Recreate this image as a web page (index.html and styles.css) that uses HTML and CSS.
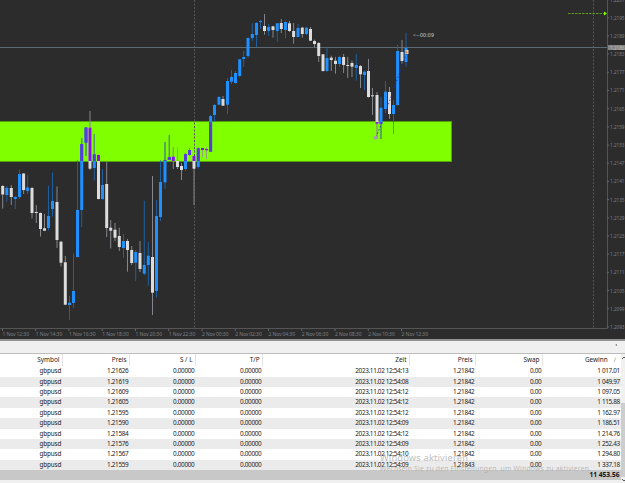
FILE: index.html
```
<!DOCTYPE html>
<html lang="de">
<head>
    <meta charset="UTF-8">
    <meta name="viewport" content="width=device-width, initial-scale=1.0">
    <title>GBPUSD</title>
    <link rel="stylesheet" href="styles.css">
    <script src="chart.js" defer></script>
</head>
<body>
<svg class="chart" width="625" height="339" viewBox="0 0 625 339">
    <defs>
        <clipPath id="in-zone"><rect x="0" y="122" width="451" height="39"/></clipPath>
    </defs>
    <rect class="zone" x="-1" y="121.5" width="452.5" height="40"/>
    <path class="day" d="M194.5 0V328M593.5 0V328"/>
    <path class="bid" d="M0 47.5H607"/>
    <g id="candles"></g>
    <g id="candles-zone" clip-path="url(#in-zone)"></g>
    <path class="trade" d="M376 137L381 125L407 52"/>
    <circle class="entry" cx="375.3" cy="137.7" r="2"/>
    <path class="exit" d="M405.5 50h3v4h-3z"/>
    <path class="exit-mark" d="M406 51l2 1.2l-2 1.2z"/>
    <text class="timer" x="413" y="36.8" textLength="21">&lt;--00:09</text>
    <path class="shift" d="M568 13.5H604"/>
    <path class="shift-head" d="M604 11.5l3 2l-3 2z"/>
    <path class="axis" d="M0 328.500H607.500V0"/>
    <g id="ticks"></g>
    <rect class="bid-box" x="608" y="45" width="17" height="5"/>
    <text class="bid-text" x="610" y="49.5" textLength="14.5" lengthAdjust="spacingAndGlyphs">1.2186</text>
</svg>
<div class="splitter"><span class="collapse"></span></div>
<div class="terminal">
    <div class="history">
        <div class="row head"><span>Symbol</span><span>Preis</span><span>S / L</span><span>T/P</span><span>Zeit</span><span>Preis</span><span>Swap</span><span>Gewinn<i class="sort">∕</i></span></div>
        <div class="row"><span>gbpusd</span><span>1.21626</span><span>0.00000</span><span>0.00000</span><span>2023.11.02 12:54:13</span><span>1.21842</span><span>0.00</span><span>1 017.01</span></div>
        <div class="row"><span>gbpusd</span><span>1.21619</span><span>0.00000</span><span>0.00000</span><span>2023.11.02 12:54:08</span><span>1.21842</span><span>0.00</span><span>1 049.97</span></div>
        <div class="row"><span>gbpusd</span><span>1.21609</span><span>0.00000</span><span>0.00000</span><span>2023.11.02 12:54:12</span><span>1.21842</span><span>0.00</span><span>1 097.05</span></div>
        <div class="row"><span>gbpusd</span><span>1.21605</span><span>0.00000</span><span>0.00000</span><span>2023.11.02 12:54:12</span><span>1.21842</span><span>0.00</span><span>1 115.88</span></div>
        <div class="row"><span>gbpusd</span><span>1.21595</span><span>0.00000</span><span>0.00000</span><span>2023.11.02 12:54:12</span><span>1.21842</span><span>0.00</span><span>1 162.97</span></div>
        <div class="row"><span>gbpusd</span><span>1.21590</span><span>0.00000</span><span>0.00000</span><span>2023.11.02 12:54:09</span><span>1.21842</span><span>0.00</span><span>1 186.51</span></div>
        <div class="row"><span>gbpusd</span><span>1.21584</span><span>0.00000</span><span>0.00000</span><span>2023.11.02 12:54:12</span><span>1.21842</span><span>0.00</span><span>1 214.76</span></div>
        <div class="row"><span>gbpusd</span><span>1.21576</span><span>0.00000</span><span>0.00000</span><span>2023.11.02 12:54:09</span><span>1.21842</span><span>0.00</span><span>1 252.43</span></div>
        <div class="row"><span>gbpusd</span><span>1.21567</span><span>0.00000</span><span>0.00000</span><span>2023.11.02 12:54:10</span><span>1.21842</span><span>0.00</span><span>1 294.80</span></div>
        <div class="row"><span>gbpusd</span><span>1.21559</span><span>0.00000</span><span>0.00000</span><span>2023.11.02 12:54:09</span><span>1.21843</span><span>0.00</span><span>1 337.18</span></div>
        <div class="total">11 453.56</div>
    </div>
    <div class="scrollbar">
        <svg width="4" height="8" viewBox="0 0 4 8"><path d="M1 5l2-2l2 2"/></svg>
        <div class="thumb"></div>
        <svg width="4" height="6" viewBox="0 0 4 6"><path d="M1 2l2 2l2-2"/></svg>
    </div>
</div>
<svg class="watermark" width="212" height="28" viewBox="0 0 212 28">
    <text class="wm-title" x="0" y="12" textLength="88">Windows aktivieren</text>
    <text class="wm-sub" x="0" y="22" textLength="211">Wechseln Sie zu den Einstellungen, um Windows zu aktivieren.</text>
</svg>
</body>
</html>
```
FILE: styles.css
```
body {
    margin: 0;
    height: 483px;
    overflow: hidden;
    display: flex;
    flex-direction: column;
    background: #fff;
    font-family: 'Noto Sans', 'Open Sans', sans-serif;
    font-size: 6.4px;
    color: #222;
}

.chart {
    display: block;
    flex: none;
    background: #2c2c2c;
}

.zone {
    fill: #80ff00;
    stroke: #55a30a;
}

.day {
    stroke: #555;
    stroke-dasharray: 2 1.5;
}

.bid {
    stroke: #5d6973;
}

.axis {
    fill: none;
    stroke: #555;
}

.tick {
    stroke: #666;
}

.label {
    font-size: 5px;
    fill: #7c8085;
}

.up-wick { fill: #1f5f9f; }
.up { fill: #1e90ff; }
.down-wick { fill: #85858c; }
.down { fill: #dcdcdc; }

#candles-zone .up-wick { fill: #5fa060; }
#candles-zone .up { fill: #593ddb; }
#candles-zone .down-wick { fill: #91a477; }
#candles-zone .down { fill: #8a10e8; }

.trade {
    fill: none;
    stroke: #2626b8;
    stroke-width: .8;
    stroke-dasharray: 1.5 2;
}

.entry { fill: #a9a3ae; }
.exit { fill: #ddd6cc; }
.exit-mark { fill: #d4762c; }

.timer {
    font-size: 5.2px;
    fill: #d0d0d0;
}

.shift {
    stroke: #5e9a14;
    stroke-dasharray: 2.5 1;
}

.shift-head { fill: #80ff00; }

.bid-box { fill: #858585; }

.bid-text {
    font-size: 5px;
    fill: #bbb;
}

.splitter {
    flex: none;
    box-sizing: border-box;
    height: 15px;
    border-top: 2px solid #929292;
    border-bottom: 1px solid #bdbdbd;
    background: #f0f0f0;
    display: flex;
    justify-content: flex-end;
    align-items: center;
    padding: 0 8px 4px 0;
}

.collapse {
    border: 1.5px solid transparent;
    border-right: 2px solid #777;
    border-left: 0;
}

.terminal {
    display: flex;
    flex: 1;
    min-height: 0;
    background: #f0f0f0;
}

.history {
    flex: none;
    width: 621px;
}

.row {
    display: grid;
    grid-template-columns: 62.5px 67px 66px 67px 147px 66px 67px 78.5px;
    height: 10.4px;
    background: #fff;
    line-height: 10px;
    text-align: right;
    white-space: nowrap;
}

.row span {
    padding-right: 1.2px;
    letter-spacing: -.35px;
}

.row span:first-child {
    letter-spacing: -.15px;
}

.row:nth-child(odd) {
    background: #ebebeb;
}

.head.row {
    height: 12.2px;
    line-height: 12px;
    background: #fff;
}

.head.row span {
    padding-right: 2px;
    border-right: 1px solid #e4e4e4;
    letter-spacing: 0;
}

.head.row span:last-child {
    border-right: 0;
    padding-right: 5px;
}

.sort {
    margin-left: 6px;
    font-style: normal;
    color: #888;
}

.total {
    height: 10px;
    padding-right: 1.5px;
    background: #c8c8c8;
    color: #111;
    font-size: 6.6px;
    font-weight: bold;
    line-height: 10px;
    text-align: right;
}

.scrollbar {
    width: 4px;
    display: flex;
    flex-direction: column;
}

.scrollbar path {
    fill: none;
    stroke: #555;
}

.thumb {
    height: 74px;
    margin-top: auto;
    background: #cdcdcd;
}

/* system notice floats over the table */
.watermark {
    position: absolute;
    left: 380px;
    top: 449px;
    fill: #a8a8a8;
    fill-opacity: .75;
}

.wm-title { font-size: 9.4px; }
.wm-sub { font-size: 6.8px; }
```
FILE: chart.js
```
// x, high, low, body top, body bottom, up
const candles = [
    [2.7, 185, 208.7, 186, 194.5, 0], [6.8, 186, 202, 188, 195, 1], [11.3, 185, 205, 188, 197, 0],
    [15.3, 196, 209, 197, 199, 1], [19.5, 169.5, 199, 174, 197, 1], [23.6, 173, 194, 173.5, 190, 0],
    [27.6, 175, 194, 187.5, 191, 1], [32, 187, 218.5, 188, 213, 0], [36.3, 205, 223, 212, 213, 0],
    [40.5, 212.5, 236.5, 213, 229, 0], [44.5, 214, 230.5, 228.3, 230.7, 0], [48.5, 186, 230.5, 216, 228, 1],
    [52.5, 172.5, 216.5, 201, 209, 1], [57, 186.5, 248, 202, 240, 0], [61, 241, 266.5, 241.7, 262.7, 0],
    [65.3, 256, 305, 262.3, 304.7, 0], [69.5, 296, 320, 302.7, 305, 1], [73.5, 253.5, 308, 291, 303, 1],
    [77.5, 160, 257.5, 210, 257, 1], [81.7, 138, 227, 144, 210, 1], [86, 127, 156, 127.5, 142.7, 1],
    [90, 111, 170, 127.7, 168.7, 0], [94.3, 134, 180.5, 154.3, 168, 1], [98.5, 154.5, 199.5, 155, 199, 0],
    [102.5, 169, 200, 185, 199, 1], [106.7, 162, 237, 184, 228, 0], [110.7, 220, 248.5, 227.7, 230.7, 0],
    [115, 223, 241, 229.7, 237.7, 0], [119.3, 227.7, 251, 236, 247, 0], [123.5, 234, 257.7, 241, 248, 1],
    [127.5, 239, 271.7, 241, 250, 0], [131.7, 246, 265, 250, 263, 0], [135.7, 250, 281, 252, 262.7, 1],
    [140, 241, 272, 253, 269, 0], [144.3, 200.7, 275.3, 265, 273.7, 1], [148.3, 242, 285.7, 255.7, 265, 1],
    [152.5, 176, 315, 257, 292.7, 0], [156.5, 200, 297.3, 216, 291, 1], [160.5, 160, 221, 182, 217, 1],
    [165, 142, 188.7, 160, 182.3, 1], [169.3, 135, 160, 157, 160, 1], [173.3, 147, 169, 156.7, 161, 0],
    [177.5, 147.7, 169, 161, 167, 0], [181.5, 163, 180, 166, 170, 0], [185.5, 153, 171, 154, 169, 1],
    [189.5, 148.3, 156, 150, 155, 1], [194, 156, 205, 156, 168.7, 0], [198.3, 147.7, 168.7, 148.3, 167, 1],
    [202.5, 148, 157, 148, 150, 0], [206.5, 147, 159, 149, 150.3, 0], [210.6, 115, 152, 116, 151.7, 1],
    [214.5, 104, 121.7, 105, 115, 1], [219, 96, 105, 97, 104.7, 1], [223, 96, 106, 99, 105.7, 0],
    [227.5, 78, 114, 81, 104.7, 1], [231.5, 70, 84, 77, 81.7, 1], [235.5, 71, 84, 73, 83, 1],
    [239.7, 59, 77.3, 59.3, 76, 1], [243.7, 51, 67, 57, 59, 1], [248, 37.3, 58, 38, 56, 1],
    [252.3, 23.3, 41, 34, 38, 1], [256.5, 22, 47, 23, 35, 1], [260.5, 20, 29, 21, 22, 1],
    [264.5, 14, 34.7, 26, 31, 0], [268.6, 24, 36, 27, 31, 1], [273, 26, 37.7, 26.3, 30, 0],
    [277.3, 23, 42, 23.3, 31, 1], [281.3, 19, 33, 23, 29, 0], [285.5, 20.7, 38, 22, 30, 1],
    [289.5, 21, 32, 23.3, 31, 0], [293.6, 23, 43.7, 31, 37, 0], [298, 24, 37, 28, 37, 1],
    [302.3, 26.7, 37.7, 27.7, 34, 0], [306.5, 27, 35, 27.7, 34, 1], [310.5, 27, 41, 29, 40.7, 0],
    [314.5, 39.7, 47, 41, 44, 0], [318.7, 42, 62, 43, 56, 0], [323, 54, 71.7, 54.3, 71, 0],
    [327, 47.7, 71.7, 58, 71, 1], [331.3, 55.7, 71, 57.7, 60, 0], [335.5, 57, 73.7, 60.7, 64, 0],
    [339.5, 55.7, 67, 57, 64, 1], [343.6, 54, 73, 57, 65, 0], [347.7, 57, 78, 65, 66, 0],
    [352, 60.7, 77, 63, 66.7, 0], [356.3, 54, 80.7, 65, 68, 1], [360.5, 65, 88, 66, 74.3, 0],
    [364.5, 70.7, 90, 71.7, 75, 1], [368.5, 59, 97.7, 71, 97, 0], [372.5, 88, 115, 95.3, 96.3, 0],
    [377, 92, 138.7, 95, 123.7, 0], [381, 96.7, 139, 107.7, 123.7, 1], [385.5, 81, 113, 91.7, 109, 1],
    [389.5, 87, 119, 92, 114, 0], [393.5, 100, 133.7, 105, 114, 1], [397.6, 44.7, 105.7, 51, 105, 1],
    [402, 40, 63.7, 52, 61, 0], [406, 32.7, 66.7, 47.7, 62, 1]
];

const drawCandles = () => candles.map(([x, high, low, top, bottom, up]) => {
    const type = up ? 'up' : 'down';
    return `<rect class="${type}-wick" x="${x - .5}" y="${high}" width="1" height="${low - high}"/>` +
        `<rect class="${type}" x="${x - 1.5}" y="${top}" width="3" height="${bottom - top}"/>`;
}).join('');

document.querySelector('#candles').innerHTML = drawCandles();
document.querySelector('#candles-zone').innerHTML = drawCandles();

const prices = ['1.2201', '1.2195', '1.2189', '1.2183', '1.2177', '1.2171', '1.2165', '1.2159', '1.2153',
    '1.2147', '1.2141', '1.2135', '1.2129', '1.2123', '1.2117', '1.2111', '1.2105', '1.2099', '1.2093'];
const times = ['1 Nov 12:30', '1 Nov 14:30', '1 Nov 16:30', '1 Nov 18:30', '1 Nov 20:30', '1 Nov 22:30',
    '2 Nov 00:30', '2 Nov 02:30', '2 Nov 04:30', '2 Nov 06:30', '2 Nov 08:30', '2 Nov 10:30', '2 Nov 12:30'];

let ticks = '';
prices.forEach((price, i) => {
    const y = -.5 + i * 18.19;
    ticks += `<path class="tick" d="M607 ${y}h2"/>` +
        `<text class="label" x="610" y="${y + 2}" textLength="14.5" lengthAdjust="spacingAndGlyphs">${price}</text>`;
});
times.forEach((time, i) => {
    const x = 2.5 + i * 33.25;
    ticks += `<path class="tick" d="M${x} 329v2"/><text class="label" x="${x}" y="335.5" textLength="26.5">${time}</text>`;
});
document.querySelector('#ticks').innerHTML = ticks;
```
